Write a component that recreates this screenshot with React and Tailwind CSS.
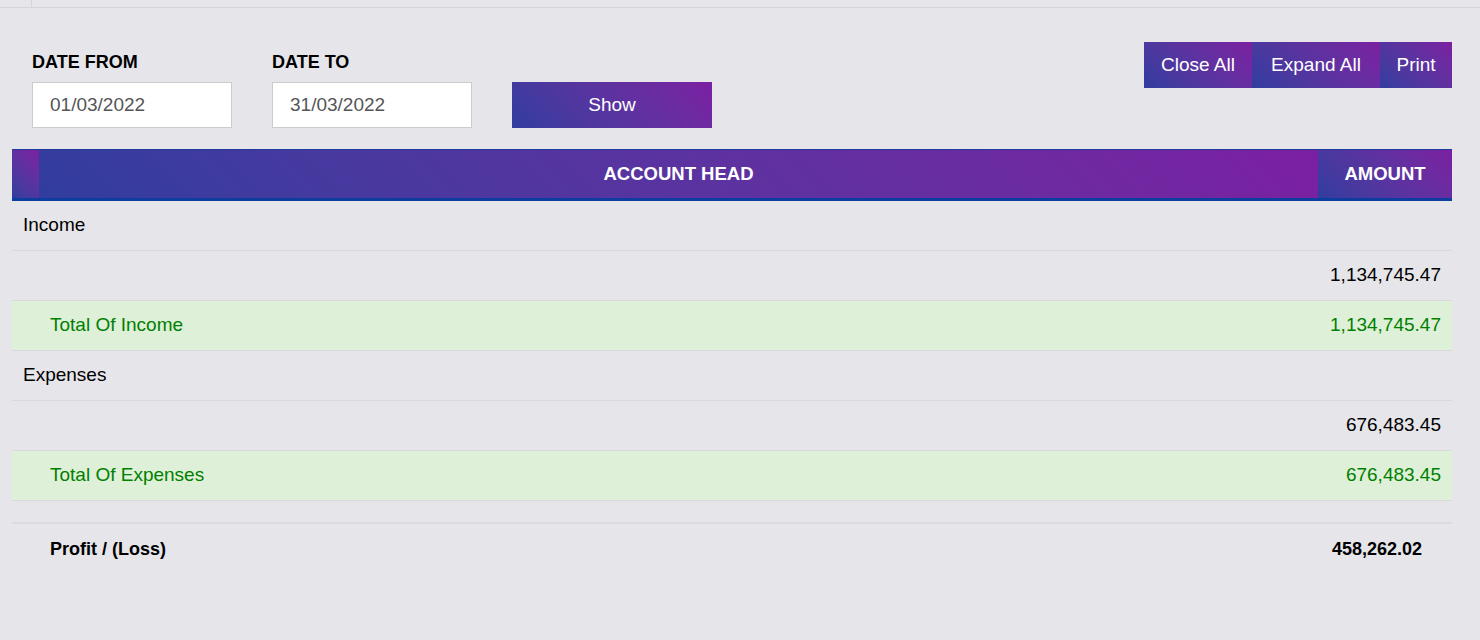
import React from 'react';

const grad = "bg-linear-45 from-[#303d9e] to-[#7b1fa2]";

const rows = [
  { type: 'head', label: 'Income' },
  { type: 'amount', amount: '1,134,745.47' },
  { type: 'total', label: 'Total Of Income', amount: '1,134,745.47' },
  { type: 'head', label: 'Expenses' },
  { type: 'amount', amount: '676,483.45' },
  { type: 'total', label: 'Total Of Expenses', amount: '676,483.45' },
];

function DateField({ label, value }) {
  return (
    <div className="flex flex-col w-[200px]">
      <span className="text-[18px] leading-[21px] font-bold text-black mb-[9px]">{label}</span>
      <div className="h-[46px] bg-white border border-[#cccccc] flex items-center pl-[17px] text-[19px] text-[#555555]">
        {value}
      </div>
    </div>
  );
}

export default function App() {
  return (
    <div className="min-h-screen bg-[#e6e5ea] font-['Liberation_Sans',Arial,sans-serif]">
      <div className="h-[8px] border-b border-[#d6d5db] flex">
        <div className="w-[32px] border-r border-[#d6d5db]"></div>
      </div>

      <div className="pl-[12px] pr-[28px]">
        <div className="flex justify-between items-start pt-[34px]">
          <div className="flex items-end gap-[40px] pl-[20px] mt-[10px]">
            <DateField label="DATE FROM" value="01/03/2022" />
            <DateField label="DATE TO" value="31/03/2022" />
            <button className={`w-[200px] h-[46px] ${grad} text-white text-[19px]`}>Show</button>
          </div>
          <div className="flex">
            <button className={`w-[108px] h-[46px] ${grad} text-white text-[19px]`}>Close All</button>
            <button className={`w-[128px] h-[46px] ${grad} text-white text-[19px]`}>Expand All</button>
            <button className={`w-[72px] h-[46px] ${grad} text-white text-[19px]`}>Print</button>
          </div>
        </div>

        <div className="mt-[21px]">
          <div className="flex h-[52px] border-t border-b-[3px] border-t-[#1f3b9c] border-b-[#0d3d9e] text-white font-bold text-[18.5px]">
            <div className={`w-[27px] ${grad}`}></div>
            <div className={`flex-1 ${grad} flex items-center justify-center`}>ACCOUNT HEAD</div>
            <div className={`w-[134px] ${grad} flex items-center justify-center`}>AMOUNT</div>
          </div>

          {rows.map((r, i) => {
            if (r.type === 'head') {
              return (
                <div key={i} className="h-[50px] border-b border-[#d9d8de] flex items-center pl-[11px] text-[19px] text-black">
                  {r.label}
                </div>
              );
            }
            if (r.type === 'amount') {
              return (
                <div key={i} className="h-[50px] border-b border-[#d9d8de] flex items-center justify-end pr-[11px] text-[19px] text-black">
                  {r.amount}
                </div>
              );
            }
            return (
              <div key={i} className="h-[50px] border-b border-[#d9d8de] bg-[#dff0d8] flex items-center justify-between pl-[38px] pr-[11px] text-[19px] text-[#008000]">
                <span>{r.label}</span>
                <span>{r.amount}</span>
              </div>
            );
          })}

          <div className="mt-[21px] h-[52px] border-t-2 border-[#dcdbe0] flex items-center justify-between pl-[38px] pr-[30px] text-[18px] font-bold text-black">
            <span>Profit / (Loss)</span>
            <span>458,262.02</span>
          </div>
        </div>
      </div>
    </div>
  );
}
